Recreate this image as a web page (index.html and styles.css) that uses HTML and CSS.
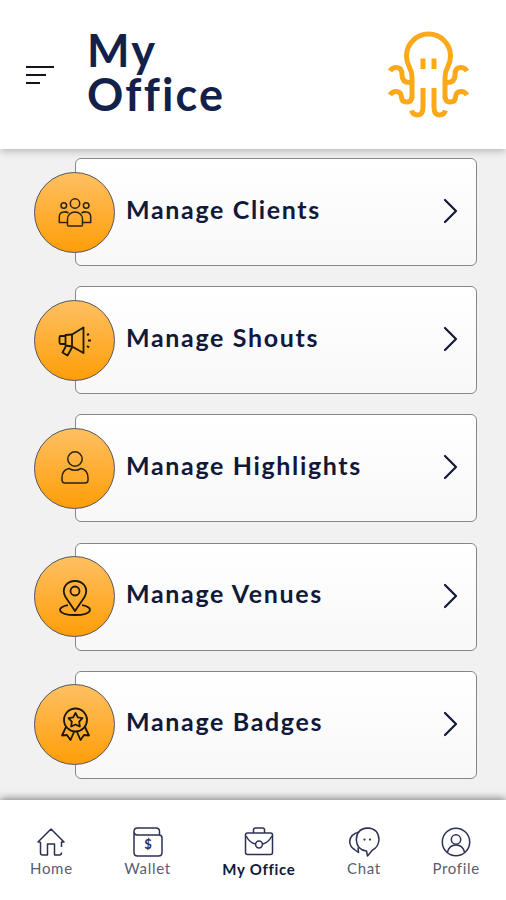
FILE: index.html
```html
<!DOCTYPE html>
<html lang="en">
<head>
  <meta charset="UTF-8" />
  <meta name="viewport" content="width=device-width, initial-scale=1.0"/>
  <title>My Office</title>
  <link rel="stylesheet" href="styles.css">
</head>
<body>
  <header class="header">
    <button class="menu" aria-label="Menu">
      <span class="bar bar-long"></span>
      <span class="bar bar-mid"></span>
      <span class="bar bar-short"></span>
    </button>
    <h1>My<br>Office</h1>
    <svg class="logo" viewBox="0 0 120 120">
      <path d="M42 83V62Q42 57 39.5 52.5Q36.5 47 36.5 41A22 22 0 0 1 80.5 41Q80.5 47 77.5 52.5Q75 57 75 62V83"/>
      <path d="M42 67.5H40Q32 67.5 32 60Q32 52.5 26.5 52.5Q22 52.5 20 56"/>
      <path d="M42 82Q41.500 87 37 87Q31.500 87 31.500 82Q31 76.500 26 76.500Q22 76.500 20 80"/>
      <path d="M75 67.5H77Q85 67.5 85 60Q85 52.5 90.500 52.5Q95 52.5 97 56"/>
      <path d="M75 82Q75.500 87 80 87Q85.500 87 85.500 82Q86 76.500 91 76.500Q95 76.500 97 80"/>
      <path d="M53 73V92Q53 100 47.500 100Q43 100 41.500 95.500"/>
      <path d="M64 73V92Q64 100 69.500 100Q74 100 75.500 95.500"/>
      <path d="M53 43.500V54M64 43.500V54"/>
    </svg>
  </header>

  <main class="list">
    <a class="card">
      <span class="circle">
        <svg viewBox="0 0 36 36">
          <circle cx="18" cy="9.500" r="4.700"/>
          <circle cx="6.800" cy="11.500" r="2.800"/>
          <circle cx="29.200" cy="11.500" r="2.800"/>
          <path d="M10.500 31V25a7.500 7 0 0 1 15 0V31Q25.500 32 24.500 32H11.500Q10.500 32 10.500 31Z"/>
          <path d="M11.500 19Q9 17.500 6.500 18Q2.300 18.500 2.300 23V28.500H10.500M24.500 19Q27 17.500 29.500 18Q33.700 18.500 33.700 23V28.500H25.500"/>
        </svg>
      </span>
      <span class="label">Manage Clients</span>
      <svg class="arrow" viewBox="0 0 16 26"><path d="M2 2L13 13L2 24"/></svg>
    </a>
    <a class="card">
      <span class="circle">
        <svg class="bold" viewBox="0 0 36 36">
          <path d="M8.500 13L15 12.500L26.500 5.500V31L15 24.500L8.500 23.500Z"/>
          <path d="M8 14H3.800Q2.500 14 2.500 15.500V20.500Q2.500 22 3.800 22H8M15 13V24.500M9 24L5.500 30.500L10.500 33.500L15 25.500"/>
          <path class="thick" d="M30 13L32 12M31 18.500H34M30 24L32 25.500"/>
        </svg>
      </span>
      <span class="label">Manage Shouts</span>
      <svg class="arrow" viewBox="0 0 16 26"><path d="M2 2L13 13L2 24"/></svg>
    </a>
    <a class="card">
      <span class="circle">
        <svg viewBox="0 0 36 36">
          <circle cx="18" cy="9" r="7.200"/>
          <path d="M12 18.500Q18 22 24 18.500Q31 20 31 28V30Q31 33 28 33H8Q5 33 5 30V28Q5 20 12 18.500Z"/>
        </svg>
      </span>
      <span class="label">Manage Highlights</span>
      <svg class="arrow" viewBox="0 0 16 26"><path d="M2 2L13 13L2 24"/></svg>
    </a>
    <a class="card">
      <span class="circle">
        <svg class="bold" viewBox="0 0 36 36">
          <path d="M18 32L8.500 18Q5 11.500 8.500 6.500Q12 2 18 2T27.500 6.500Q31 11.500 27.500 18Z"/>
          <circle cx="18" cy="12" r="4.500"/>
          <path d="M11 26.200C-1 28 0 36 18 36S37 28 25 26.200"/>
        </svg>
      </span>
      <span class="label">Manage Venues</span>
      <svg class="arrow" viewBox="0 0 16 26"><path d="M2 2L13 13L2 24"/></svg>
    </a>
    <a class="card">
      <span class="circle">
        <svg class="bold" viewBox="0 0 36 36">
          <circle cx="18.500" cy="13" r="11.500"/>
          <path d="M18.500 6L20.800 10.300L25.500 11.200L22.200 14.700L22.800 19.500L18.500 17.500L14.200 19.500L14.800 14.700L11.500 11.200L16.200 10.300Z"/>
          <path d="M9 20L5 28.500L10 28L13.500 33L17 25M28 20L32 28.500L27 28L23.500 33L20 25"/>
        </svg>
      </span>
      <span class="label">Manage Badges</span>
      <svg class="arrow" viewBox="0 0 16 26"><path d="M2 2L13 13L2 24"/></svg>
    </a>
  </main>

  <nav class="nav">
    <a class="tab">
      <svg viewBox="0 0 30 30"><path d="M4.500 15H2L15 2L28 15H25M4.500 15V26Q4.500 28 6.500 28H11.500V17H18.500V28H23.500Q25.500 28 25.500 25.500M25.500 15V20"/></svg>
      <span>Home</span>
    </a>
    <a class="tab">
      <svg viewBox="0 0 30 30">
        <path d="M1 4.500V25.500Q1 29 4.500 29H25.500Q29 29 29 25.500V11Q29 8 26 8H4.500Q1 8 1 4.500Q1 1 4.500 1H23Q26.500 1 26.500 4.500V8"/>
        <text x="15" y="22">$</text>
      </svg>
      <span>Wallet</span>
    </a>
    <a class="tab active">
      <svg viewBox="0 0 30 30">
        <rect x="1.500" y="6" width="27" height="21.500" rx="2"/>
        <path d="M9.500 6V3Q9.500 1 11.500 1H18.500Q20.500 1 20.500 3V6M2 9Q6 16 11.500 17M28 9Q24 16 18.500 17"/>
        <circle cx="15" cy="17.500" r="3.400"/>
      </svg>
      <span>My Office</span>
    </a>
    <a class="tab">
      <svg viewBox="0 0 30 30">
        <path d="M17.500 24Q8 23 7.300 13Q7.500 1.500 18.500 1Q29.500 1.500 30 12.500Q29.500 20 23.500 23L18.500 29Z"/>
        <path d="M10.500 5Q1 7 .7 14.500Q1 20 5.500 22.500L9.500 25.500L9 20.500"/>
        <path class="dots" d="M15.500 12.500V12.600M21 12.500V12.600"/>
      </svg>
      <span>Chat</span>
    </a>
    <a class="tab">
      <svg viewBox="0 0 30 30">
        <circle cx="15" cy="15" r="13.700"/>
        <circle cx="15" cy="12.500" r="4.700"/>
        <path d="M6.500 25.500Q8 18 15 18T23.500 25.500"/>
      </svg>
      <span>Profile</span>
    </a>
  </nav>
</body>
</html>
```
FILE: styles.css
```css
* {
  box-sizing: border-box;
}

body {
  margin: 0;
  height: 900px;
  display: grid;
  grid-template-rows: 149px 1fr 100px;
  font-family: Lato, "Liberation Sans", sans-serif;
  background: #f1f1f1;
  color: #11193a;
  overflow: hidden;
}

svg {
  fill: none;
  stroke: currentColor;
  stroke-linejoin: round;
  overflow: visible;
}

.header {
  display: flex;
  align-items: flex-start;
  padding: 0 16px 0 26px;
  background: white;
  box-shadow: 0 2px 8px rgba(0, 0, 0, 0.25);
}

.menu {
  display: flex;
  flex-direction: column;
  gap: 6px;
  width: 28px;
  margin: 66px 33px 0 0;
  padding: 0;
  border: none;
  background: none;
}

.bar {
  height: 2px;
  background: #11131f;
}

.bar-long {
  width: 28px;
}

.bar-mid {
  width: 20px;
}

.bar-short {
  width: 14px;
}

h1 {
  margin: 28px 0 0;
  font-size: 45px;
  line-height: 44px;
  font-weight: 700;
  letter-spacing: 2.2px;
  color: #13214a;
}

.logo {
  width: 120px;
  height: 120px;
  margin: 15px 0 0 auto;
  color: #fba919;
  stroke-width: 5;
}

.list {
  display: flex;
  flex-direction: column;
  gap: 20.2px;
  padding: 9px 29px 0 75px;
}

.card {
  display: flex;
  align-items: center;
  height: 108px;
  padding-right: 17px;
  border: 1.5px solid #85878b;
  border-radius: 6px;
  background: linear-gradient(white, #f8f8f8);
}

.circle {
  display: flex;
  align-items: center;
  justify-content: center;
  flex: none;
  width: 81px;
  height: 81px;
  margin-left: -42px;
  border: 1.3px solid #575552;
  border-radius: 50%;
  background: linear-gradient(#ffc062, #ff9d08);
}

.circle svg {
  width: 36px;
  height: 36px;
  color: #2b2410;
  stroke-width: 1.5;
}

.circle .bold {
  color: #1d1708;
  stroke-width: 1.8;
}

.circle .thick {
  stroke-width: 2;
}

.label {
  margin: -7px auto 0 11px;
  font-size: 25px;
  font-weight: 700;
  letter-spacing: 1.65px;
}

.arrow {
  width: 16px;
  height: 26px;
  margin-top: -2px;
  stroke-width: 2.2;
  stroke-linecap: round;
}

.nav {
  display: flex;
  justify-content: space-between;
  padding: 27px 26px 0 30px;
  background: white;
  box-shadow: 0 -1px 8px rgba(0, 0, 0, 0.5);
}

.tab {
  display: flex;
  flex-direction: column;
  align-items: center;
  gap: 1px;
  font-size: 15px;
  line-height: 20px;
  letter-spacing: 0.7px;
  color: #595d70;
}

.tab svg {
  width: 30px;
  height: 30px;
  color: #2b3154;
  stroke-width: 1.5;
}

.tab text {
  font-size: 13px;
  font-weight: 700;
  letter-spacing: 0;
  text-anchor: middle;
  fill: currentColor;
  stroke: none;
}

.tab .dots {
  stroke-width: 2.2;
  stroke-linecap: round;
}

.active {
  gap: 2px;
  color: #11193a;
  font-weight: 700;
}
```
